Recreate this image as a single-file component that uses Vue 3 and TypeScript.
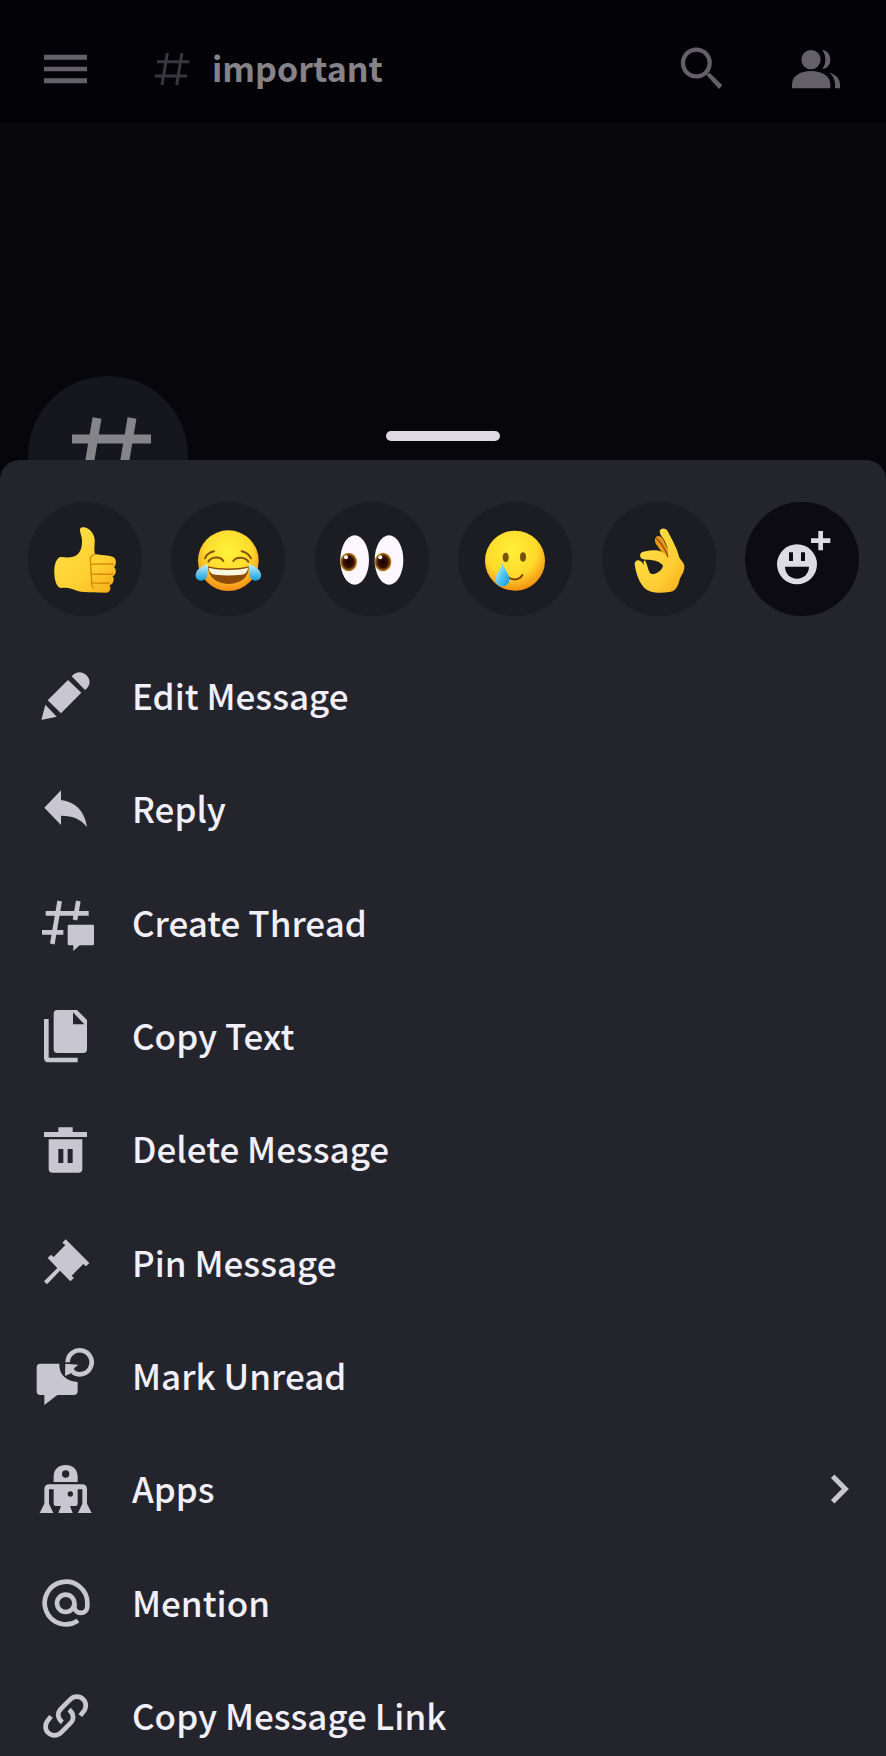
<script setup lang="ts">
import { ref } from 'vue'

interface Action {
  id: string
  label: string
  viewBox: string
  submenu?: boolean
}

const channel = ref('important')

const actions: Action[] = [
  { id: 'edit', label: 'Edit Message', viewBox: '108 48 180 180' },
  { id: 'reply', label: 'Reply', viewBox: '108 388 180 180' },
  { id: 'thread', label: 'Create Thread', viewBox: '108 69 180 180' },
  { id: 'copy', label: 'Copy Text', viewBox: '108 408 180 180' },
  { id: 'delete', label: 'Delete Message', viewBox: '108 59 180 180' },
  { id: 'pin', label: 'Pin Message', viewBox: '108 399 180 180' },
  { id: 'unread', label: 'Mark Unread', viewBox: '108 79 180 180' },
  { id: 'apps', label: 'Apps', viewBox: '108 419 180 180', submenu: true },
  { id: 'mention', label: 'Mention', viewBox: '108 69 180 180' },
  { id: 'link', label: 'Copy Message Link', viewBox: '108 410 180 180' },
]
</script>

<template>
  <div class="screen">
    <header class="topbar">
      <button class="icon-button" aria-label="Open navigation">
        <svg class="icon" viewBox="108 118 180 180">
          <path d="M132 165h129v15H132zM132 201h129v14H132zM132 236h129v15H132z" />
        </svg>
      </button>
      <h1 class="channel">
        <svg class="icon hash" viewBox="426 118 180 180" aria-hidden="true">
          <path d="M502 160L486 256M546 160L530 256M471 186H568M464 229H561" />
        </svg>
        <span class="channel-name">{{ channel }}</span>
      </h1>
      <div class="tools">
        <button class="icon-button" aria-label="Search">
          <svg class="icon" viewBox="87 118 180 180">
            <circle cx="160" cy="190" r="40" fill="none" stroke="currentColor" stroke-width="13" />
            <path d="M190 226l10-7 38 38-10 11z" />
          </svg>
        </button>
        <button class="icon-button" aria-label="Members">
          <svg class="icon" viewBox="429 118 180 180">
            <circle cx="504" cy="180" r="29" />
            <path d="M447 266v-12c0-24 24-40 57-40s58 16 58 40v12z" />
            <path d="M538 151c14 1 24 14 24 29s-10 27-24 28c12-16 12-41 0-57z" />
            <path d="M560 219c20 6 31 19 31 35v12h-15v-12c0-14-6-25-16-35z" />
          </svg>
        </button>
      </div>
    </header>

    <main class="conversation">
      <div class="channel-badge">
        <svg viewBox="0 0 160 160" aria-hidden="true">
          <path d="M69 42L57 113M104 42L92 113M44 63H123M37 96H116" />
        </svg>
      </div>
      <div class="handle"></div>
    </main>

    <section class="sheet" aria-label="Message actions">
      <div class="reactions">
        <button class="reaction" aria-label="Thumbs up">
          <svg viewBox="84 33 342 342">
            <defs>
              <linearGradient id="thumb" x1="0" y1="0" x2="1" y2="1">
                <stop offset="0" stop-color="#ffe34d" />
                <stop offset=".65" stop-color="#ffcf30" />
                <stop offset="1" stop-color="#f2a91a" />
              </linearGradient>
            </defs>
            <path fill="url(#thumb)" d="M181 198C167 203 162 224 163 247c1 24 7 42 20 44 20-3 32 1 50 9 12 4 28 3 44 4l43 1c12-1 14-17 8-22 14-3 16-20 10-27 12-5 12-22 4-28 8-6 8-28-4-31-14-4-36-5-53-8-4-12 0-26-1-44-3-24-24-41-41-35-8 5 2 22 3 35 1 22-3 35-13 45-12 10-27 11-52 8z" />
            <path fill="none" stroke="#d98708" stroke-width="4" stroke-linecap="round" d="M286 190c-9 1-15 5-15 13l4 68c-1 11 0 17 7 20M276 220c19-3 39 0 64-1M276 250c20-2 37 2 62-1M276 276c14-1 29 2 51 0" />
          </svg>
        </button>
        <button class="reaction" aria-label="Tears of joy">
          <svg viewBox="513 33 342 342">
            <defs>
              <radialGradient id="joyface" cx=".5" cy=".34" r=".68">
                <stop offset="0" stop-color="#fff338" />
                <stop offset=".55" stop-color="#ffdb2f" />
                <stop offset="1" stop-color="#f38713" />
              </radialGradient>
              <linearGradient id="tear" x1="0" y1="0" x2="0" y2="1">
                <stop offset="0" stop-color="#c3f5ff" />
                <stop offset="1" stop-color="#159ddc" />
              </linearGradient>
            </defs>
            <circle cx="685" cy="209" r="91" fill="url(#joyface)" />
            <path d="M624 226c36 9 86 9 123 0 0 31-23 53-61 53s-62-22-62-53z" fill="#8c4b08" />
            <path d="M626 230c35 9 85 9 118 0-1 13-9 20-20 21-25 3-51 3-77 0-12-1-20-8-21-21z" fill="#fff8df" />
            <path d="M625 212c8-15 36-18 45-2M700 210c9-15 37-12 45 2M615 202c4-10 13-18 27-21M725 181c14 3 23 11 28 21" fill="none" stroke="#8b5307" stroke-width="6" stroke-linecap="round" />
            <path d="M624 219c-12 5-29 10-35 25-7 15 3 26 16 25 21-2 18-28 19-50z" fill="url(#tear)" />
            <path d="M746 219c12 5 29 10 35 25 7 15-3 26-16 25-21-2-18-28-19-50z" fill="url(#tear)" />
          </svg>
        </button>
        <button class="reaction" aria-label="Eyes">
          <svg viewBox="75 33 342 342">
            <defs>
              <radialGradient id="iris">
                <stop offset="0" stop-color="#140101" />
                <stop offset=".62" stop-color="#3b1004" />
                <stop offset="1" stop-color="#c98f1c" />
              </radialGradient>
            </defs>
            <ellipse cx="194" cy="207" rx="43" ry="74" fill="#fdf7ff" />
            <ellipse cx="297" cy="207" rx="43" ry="74" fill="#fdf7ff" />
            <ellipse cx="176" cy="213" rx="25" ry="28" fill="url(#iris)" />
            <ellipse cx="279" cy="213" rx="25" ry="28" fill="url(#iris)" />
            <circle cx="168" cy="199" r="6" fill="#fff" />
            <circle cx="271" cy="199" r="6" fill="#fff" />
          </svg>
        </button>
        <button class="reaction" aria-label="Smiling with tear">
          <svg viewBox="504 33 342 342">
            <defs>
              <radialGradient id="smileface" cx=".44" cy=".32" r=".72">
                <stop offset="0" stop-color="#fff038" />
                <stop offset=".6" stop-color="#ffd92b" />
                <stop offset="1" stop-color="#f28610" />
              </radialGradient>
              <linearGradient id="drop" x1="0" y1="0" x2="1" y2="1">
                <stop offset="0" stop-color="#d5f8ff" />
                <stop offset=".5" stop-color="#54c9f1" />
                <stop offset="1" stop-color="#1193d4" />
              </linearGradient>
            </defs>
            <circle cx="675" cy="209" r="90" fill="url(#smileface)" />
            <ellipse cx="647" cy="199" rx="9" ry="14" fill="#78500c" />
            <ellipse cx="699" cy="198" rx="9" ry="14" fill="#78500c" />
            <path d="M650 254c13 16 37 15 47-2" fill="none" stroke="#784009" stroke-width="6" stroke-linecap="round" />
            <path d="M638 215c-3 18-21 31-21 50 0 13 8 21 20 21 13 0 21-8 21-21 0-18-16-31-20-50z" fill="url(#drop)" />
          </svg>
        </button>
        <button class="reaction" aria-label="OK hand">
          <svg viewBox="47 33 342 342">
            <defs>
              <linearGradient id="hand" x1="0" y1="0" x2="1" y2="1">
                <stop offset="0" stop-color="#ffe34d" />
                <stop offset=".65" stop-color="#ffce33" />
                <stop offset="1" stop-color="#f4a81a" />
              </linearGradient>
            </defs>
            <path d="M208 140c5-10 18-4 22 5l24 48-18 5-21-31c-8-10-12-18-7-27z" fill="#e69b18" />
            <path fill="url(#hand)" fill-rule="evenodd" d="M220 121c2-12 20-10 25 1 12 25 27 47 33 75 5 11 14 16 16 27 2 19-12 31-15 45-5 22-16 33-30 34-31 4-64 3-78-16-15-17-23-45-26-67-1-12 13-18 22-6l7 10c-7-17 3-20 22-18-15-1-26 2-32-5-7-11 1-19 14-20 28-7 49-4 64 15 6-18 1-30-6-44-6-12-15-19-16-31zM175 206c11 17 10 43 23 43 15 0 31-14 32-25-8-13-29-19-55-18z" />
            <path d="M211 143c12 9 18 22 26 35 5 8 7 13 7 19" fill="none" stroke="#9c4809" stroke-width="4" stroke-linecap="round" />
          </svg>
        </button>
        <button class="reaction add" aria-label="Add reaction">
          <svg viewBox="477 33 342 342">
            <path fill="#dddbe4" fill-rule="evenodd" d="M633 160a60 60 0 1 0 0 120a60 60 0 1 0 0-120zM609 184h12v26h-12zM645 184h12v26h-12zM597 227h72c0 21-16 36-36 36s-36-15-36-36z" />
            <path fill="#dddbe4" d="M697 120h14v22h22v14h-22v22h-14v-22h-22v-14h22z" />
          </svg>
        </button>
      </div>

      <ul class="actions">
        <li v-for="action in actions" :key="action.id">
          <button class="action">
            <svg class="icon" :viewBox="action.viewBox" aria-hidden="true">
              <g v-if="action.id === 'edit'">
                <path d="M204 90l40 38-61 62-40-39zM215 79c12-14 28-16 41-6 15 12 17 29 5 42l-6 5zM136 164l34 36-43 9c-2 0-3-1-2-3z" />
              </g>
              <path v-else-if="action.id === 'reply'" d="M183 422v29c42 5 71 33 78 81-18-23-42-34-78-34v28l-50-52z" />
              <g v-else-if="action.id === 'thread'">
                <path class="line" stroke-width="14" d="M179 93l-22 129M235 93l-10 57M137 130h129M126 187h64" />
                <path d="M207 164h71q4 0 4 4v54q0 4-4 4h-39l-19 17v-17h-13q-4 0-4-4v-54q0-4 4-4z" />
              </g>
              <g v-else-if="action.id === 'copy'">
                <path fill-rule="evenodd" d="M172 420h59l30 30v88q0 11-11 11h-78q-11 0-11-11V431q0-11 11-11zM219 427v36h34z" />
                <path class="line" stroke-width="14" d="M139 447v116q0 7 7 7h87" />
              </g>
              <path v-else-if="action.id === 'delete'" fill-rule="evenodd" d="M175 84h43v14h43v15H132V98h43zM146 120h101v88q0 12-12 12h-77q-12 0-12-12zM175 149v42h15v-42zM203 149v42h15v-42z" />
              <path v-else-if="action.id === 'pin'" d="M197 418l71 71-10 10-8-7-35 35 7 7-11 10-31-32-39 41-9-9 40-40-29-30 10-10 8 7 35-36-9-7z" />
              <g v-else-if="action.id === 'unread'">
                <path d="M121 132h57c0 20 6 33 18 42 10 8 22 11 37 13v27q0 12-12 12h-49l-39 30v-30h-12q-11 0-11-12v-70q0-12 11-12z" />
                <path class="line" stroke-width="14" d="M203 128a36 36 0 1 1 15 29" />
                <path d="M196 132l39 3-13 11 2 10-29 13z" />
              </g>
              <g v-else-if="action.id === 'apps'">
                <path fill-rule="evenodd" d="M161 488v-16c0-22 15-35 36-35s36 13 36 35v16zM197 453a11 11 0 1 0 0 22a11 11 0 1 0 0-22z" />
                <path fill-rule="evenodd" d="M148 495h98q15 0 15 15v43l14 28h-41l13-28v-43h-14v43q0 7-7 7h-16l8 21h-43l8-21h-15q-7 0-7-7v-43h-14v43l13 28h-41l14-28v-43q0-15 15-15zM211 516a8 8 0 1 0 0 16a8 8 0 1 0 0-16z" />
              </g>
              <g v-else-if="action.id === 'mention'" class="line" stroke-width="14">
                <circle cx="197" cy="160" r="26" />
                <path d="M234 212A64 64 0 1 1 262 159v10c0 26-39 26-39 0v-9" />
              </g>
              <g v-else class="line" stroke-width="14">
                <path d="M241 499l7-9c12-12 12-30 2-40-11-11-28-11-39 0l-27 27c-12 12-14 28 3 42" />
                <path d="M153 501l-7 9c-12 12-12 30-2 40 11 11 28 11 39 0l27-27c12-12 14-28-3-42" />
              </g>
            </svg>
            <span class="label">{{ action.label }}</span>
            <svg v-if="action.submenu" class="chevron" viewBox="132 104 96 96" aria-hidden="true">
              <path class="line" stroke-width="15" d="M158 114l38 38-38 38" />
            </svg>
          </button>
        </li>
      </ul>
    </section>
  </div>
</template>

<style>
body {
  margin: 0;
  background: #06060b;
}
</style>

<style scoped>
.screen {
  display: flex;
  flex-direction: column;
  min-height: 100vh;
  font-family: "Noto Sans CJK SC", "Noto Sans", sans-serif;
}

button {
  padding: 0;
  border: 0;
  background: none;
  color: inherit;
  font: inherit;
  cursor: pointer;
}

svg {
  display: block;
  fill: currentColor;
}

.icon {
  flex: none;
  width: 60px;
  height: 60px;
}

.line {
  fill: none;
  stroke: currentColor;
}

.topbar {
  display: flex;
  align-items: center;
  box-sizing: border-box;
  height: 123px;
  padding: 15px 40px 0 36px;
  background: #020207;
  color: #636167;
}

.channel {
  display: flex;
  flex: 1;
  align-items: center;
  gap: 10px;
  margin: 0 0 0 46px;
  color: #858389;
  font-size: 34px;
  font-weight: 700;
  line-height: 48px;
}

.channel-name,
.label {
  padding-bottom: 2px;
}

.hash path {
  fill: none;
  stroke: #39383e;
  stroke-width: 9;
}

.tools {
  display: flex;
  gap: 54px;
}

.conversation {
  display: flex;
  position: relative;
  align-items: flex-start;
  box-sizing: border-box;
  height: 337px;
  padding: 253px 28px 0;
  overflow: hidden;
}

.channel-badge {
  width: 160px;
  height: 160px;
  flex: none;
  border-radius: 50%;
  background: #16171e;
}

.channel-badge path {
  fill: none;
  stroke: #858589;
  stroke-width: 9;
}

.handle {
  position: absolute;
  bottom: 19px;
  left: 50%;
  width: 114px;
  height: 10px;
  border-radius: 5px;
  background: #dddbe1;
  transform: translateX(-50%);
}

.sheet {
  display: flex;
  flex: 1;
  flex-direction: column;
  border-radius: 20px 20px 0 0;
  background: #24242c;
  color: #f1eff9;
}

.reactions {
  display: flex;
  justify-content: space-between;
  padding: 42px 27px 40px 28px;
}

.reaction {
  width: 114px;
  height: 114px;
  border-radius: 50%;
  background: #1c1d22;
}

.reaction.add {
  background: #0b0b11;
}

.actions {
  display: flex;
  flex: 1;
  flex-direction: column;
  justify-content: space-between;
  margin: 0;
  padding: 0;
  list-style: none;
}

.action {
  display: flex;
  align-items: center;
  box-sizing: border-box;
  width: 100%;
  height: 80px;
  gap: 36px;
  padding: 0 30px 0 36px;
  text-align: left;
}

.action .icon,
.chevron {
  color: #c8c6d1;
}

.label {
  flex: 1;
  font-size: 35px;
  font-weight: 500;
  line-height: 48px;
}

.chevron {
  width: 32px;
  height: 32px;
}
</style>
